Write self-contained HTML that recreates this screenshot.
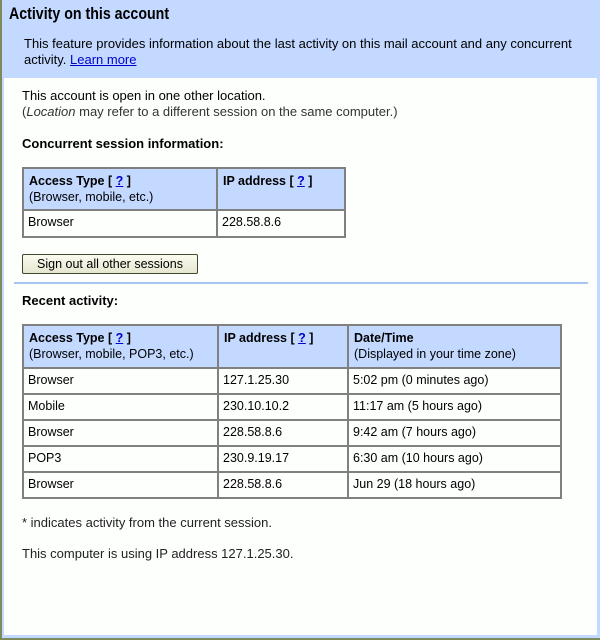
<!DOCTYPE html>
<html><head><style>
body{margin:0;width:600px;height:640px;background:#c3d9ff;font-family:"Liberation Sans",Arial,sans-serif;font-size:13px;color:#000;position:relative;overflow:hidden}
.ol{position:absolute;background:#7d8a5a}
.hdr{position:absolute;left:2px;top:0;width:595px;height:78px;background:#c3d9ff}
h1{position:absolute;left:9px;top:5px;margin:0;font-size:16.5px;font-weight:bold;transform:scaleX(0.86);transform-origin:0 0;white-space:nowrap}
.desc{position:absolute;left:24px;top:36px;width:556px;line-height:16px;font-size:13px}
a{color:#00c;text-decoration:underline}
.body{position:absolute;left:4px;top:78px;width:593px;height:557px;background:#fdfffd}
.t{position:absolute;white-space:nowrap}
table{position:absolute;border-collapse:collapse;border:2px solid #808080;font-size:12.5px}
td{border:2px solid #808080;padding:4px 4px 2px 4px;vertical-align:top;line-height:15px}
th{background:#c3d9ff;text-align:left;font-weight:normal;border:2px solid #808080;padding:4px 5px;vertical-align:top;line-height:16px}
th b{font-weight:bold}
.btn{position:absolute;left:22px;top:254px;width:174px;height:18px;border:1px solid #3a4a2a;border-radius:2px;background:linear-gradient(#fbfbf0,#e6e6d0);font-size:12.5px;text-align:center;line-height:18px}
.hr{position:absolute;left:14px;top:282px;width:574px;height:2px;background:#a8c4f0}
</style></head><body>
<div class="ol" style="left:0;top:0;width:2px;height:640px"></div>
<div class="ol" style="left:0;top:638px;width:600px;height:2px"></div>
<div class="hdr"></div>
<h1>Activity on this account</h1>
<div class="desc">This feature provides information about the last activity on this mail account and any concurrent activity. <a>Learn more</a></div>
<div class="body"></div>
<div class="t" style="left:22px;top:88px">This account is open in one other location.</div>
<div class="t" style="left:22px;top:104px;color:#333">(<i>Location</i> may refer to a different session on the same computer.)</div>
<div class="t" style="left:22px;top:136px;font-weight:bold">Concurrent session information:</div>
<table style="left:22px;top:167px;width:324px">
<tr style="height:42px"><th style="width:182px"><b>Access Type [ <a>?</a> ]</b><br>(Browser, mobile, etc.)</th><th><b>IP address [ <a>?</a> ]</b></th></tr>
<tr style="height:27px"><td>Browser</td><td>228.58.8.6</td></tr>
</table>
<div class="btn">Sign out all other sessions</div>
<div class="hr"></div>
<div class="t" style="left:22px;top:293px;font-weight:bold">Recent activity:</div>
<table style="left:22px;top:324px;width:540px">
<tr style="height:43px"><th style="width:183px"><b>Access Type [ <a>?</a> ]</b><br>(Browser, mobile, POP3, etc.)</th><th style="width:118px"><b>IP address [ <a>?</a> ]</b></th><th><b>Date/Time</b><br>(Displayed in your time zone)</th></tr>
<tr style="height:26px"><td>Browser</td><td>127.1.25.30</td><td>5:02 pm (0 minutes ago)</td></tr>
<tr style="height:26px"><td>Mobile</td><td>230.10.10.2</td><td>11:17 am (5 hours ago)</td></tr>
<tr style="height:26px"><td>Browser</td><td>228.58.8.6</td><td>9:42 am (7 hours ago)</td></tr>
<tr style="height:26px"><td>POP3</td><td>230.9.19.17</td><td>6:30 am (10 hours ago)</td></tr>
<tr style="height:26px"><td>Browser</td><td>228.58.8.6</td><td>Jun 29 (18 hours ago)</td></tr>
</table>
<div class="t" style="left:22px;top:515px;color:#222">* indicates activity from the current session.</div>
<div class="t" style="left:22px;top:546px;color:#222">This computer is using IP address 127.1.25.30.</div>
</body></html>
